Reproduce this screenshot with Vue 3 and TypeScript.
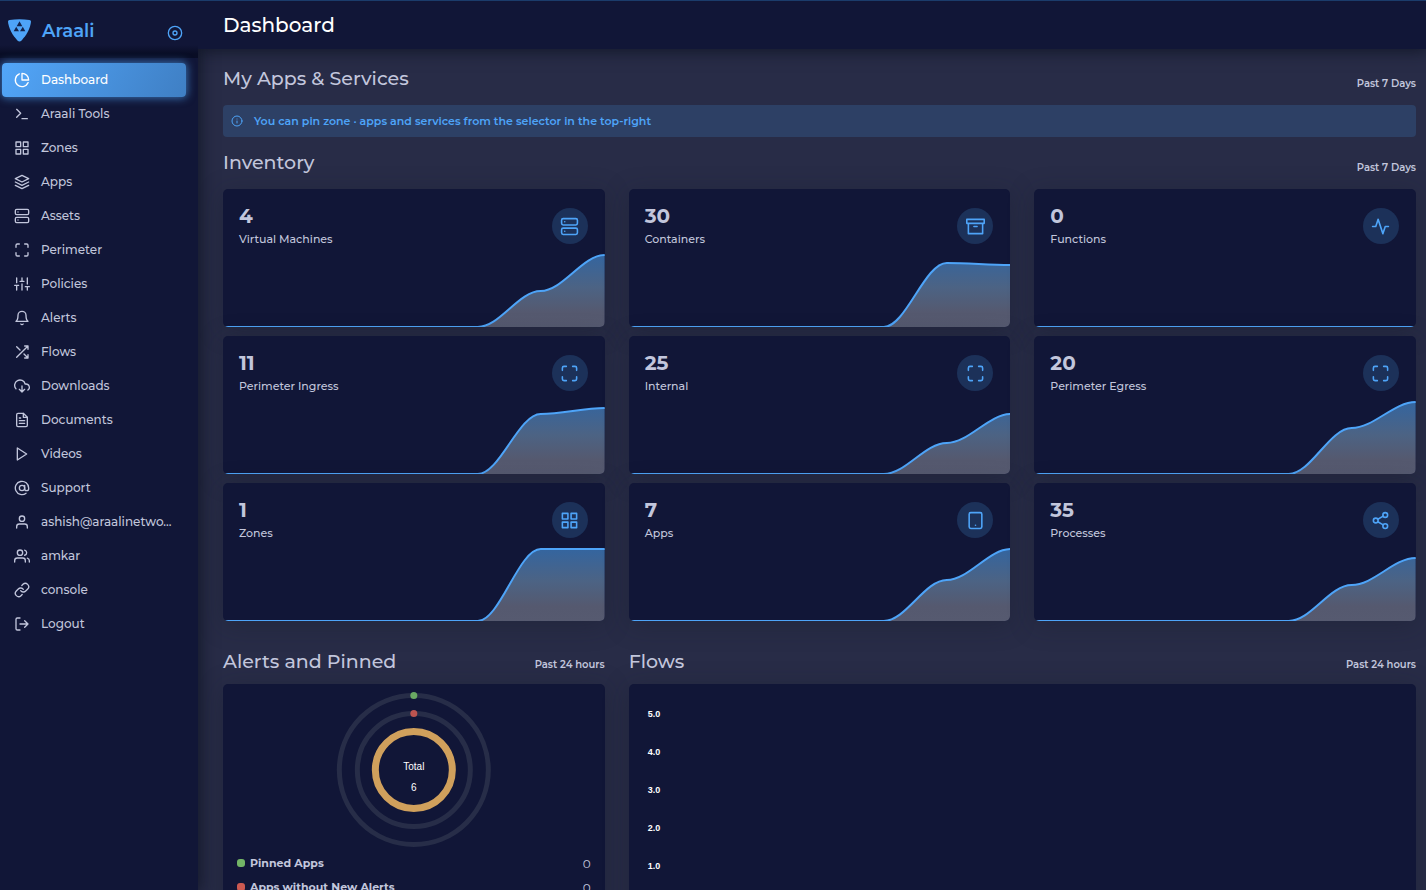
<script setup lang="ts">
interface NavItem {
  label: string
  icon: string
}

interface Stat {
  value: number
  label: string
  icon: string
  mid: number
  end: number
}

interface LegendRow {
  label: string
  value: number
  tone: string
}

const icons: Record<string, string> = {
  pie: '<path d="M21.21 15.89A10 10 0 1 1 8 2.83"/><path d="M22 12A10 10 0 0 0 12 2v10z"/>',
  terminal: '<path d="M4 17l6-6-6-6"/><path d="M12 19h8"/>',
  grid: '<path d="M3 3h7v7H3zM14 3h7v7h-7zM14 14h7v7h-7zM3 14h7v7H3z"/>',
  layers: '<path d="M12 2L2 7l10 5 10-5-10-5z"/><path d="M2 17l10 5 10-5"/><path d="M2 12l10 5 10-5"/>',
  server: '<rect x="2" y="2" width="20" height="8" rx="2"/><rect x="2" y="14" width="20" height="8" rx="2"/><path d="M6 6h.01M6 18h.01"/>',
  maximize: '<path d="M8 3H5a2 2 0 0 0-2 2v3m18 0V5a2 2 0 0 0-2-2h-3m0 18h3a2 2 0 0 0 2-2v-3M3 16v3a2 2 0 0 0 2 2h3"/>',
  sliders: '<path d="M4 21v-7M4 10V3M12 21v-9M12 8V3M20 21v-5M20 12V3M1 14h6M9 8h6M17 16h6"/>',
  bell: '<path d="M18 8A6 6 0 0 0 6 8c0 7-3 9-3 9h18s-3-2-3-9"/><path d="M13.73 21a2 2 0 0 1-3.46 0"/>',
  shuffle: '<path d="M16 3h5v5M4 20L21 3M21 16v5h-5M15 15l6 6M4 4l5 5"/>',
  download: '<path d="M8 17l4 4 4-4M12 12v9"/><path d="M20.88 18.09A5 5 0 0 0 18 9h-1.26A8 8 0 1 0 3 16.29"/>',
  file: '<path d="M14 2H6a2 2 0 0 0-2 2v16a2 2 0 0 0 2 2h12a2 2 0 0 0 2-2V8z"/><path d="M14 2v6h6M16 13H8M16 17H8M10 9H8"/>',
  play: '<path d="M5 3l14 9-14 9V3z"/>',
  at: '<circle cx="12" cy="12" r="4"/><path d="M16 8v5a3 3 0 0 0 6 0v-1a10 10 0 1 0-3.92 7.94"/>',
  user: '<path d="M20 21v-2a4 4 0 0 0-4-4H8a4 4 0 0 0-4 4v2"/><circle cx="12" cy="7" r="4"/>',
  users: '<path d="M17 21v-2a4 4 0 0 0-4-4H5a4 4 0 0 0-4 4v2"/><circle cx="9" cy="7" r="4"/><path d="M23 21v-2a4 4 0 0 0-3-3.87M16 3.13a4 4 0 0 1 0 7.75"/>',
  link: '<path d="M10 13a5 5 0 0 0 7.54.54l3-3a5 5 0 0 0-7.07-7.07l-1.72 1.71"/><path d="M14 11a5 5 0 0 0-7.54-.54l-3 3a5 5 0 0 0 7.07 7.07l1.71-1.71"/>',
  logout: '<path d="M9 21H5a2 2 0 0 1-2-2V5a2 2 0 0 1 2-2h4M16 17l5-5-5-5M21 12H9"/>',
  archive: '<path d="M21 8v13H3V8M1 3h22v5H1zM10 12h4"/>',
  activity: '<path d="M22 12h-4l-3 9L9 3l-3 9H2"/>',
  tablet: '<rect x="4" y="2" width="16" height="20" rx="2"/><path d="M12 18h.01"/>',
  share: '<circle cx="18" cy="5" r="3"/><circle cx="6" cy="12" r="3"/><circle cx="18" cy="19" r="3"/><path d="M8.59 13.51l6.83 3.98M15.41 6.51l-6.82 3.98"/>',
  disc: '<circle cx="12" cy="12" r="10"/><circle cx="12" cy="12" r="3"/>',
  info: '<circle cx="12" cy="12" r="10"/><path d="M12 16v-4M12 8h.01"/>',
}

const navItems: NavItem[] = [
  { label: 'Dashboard', icon: 'pie' },
  { label: 'Araali Tools', icon: 'terminal' },
  { label: 'Zones', icon: 'grid' },
  { label: 'Apps', icon: 'layers' },
  { label: 'Assets', icon: 'server' },
  { label: 'Perimeter', icon: 'maximize' },
  { label: 'Policies', icon: 'sliders' },
  { label: 'Alerts', icon: 'bell' },
  { label: 'Flows', icon: 'shuffle' },
  { label: 'Downloads', icon: 'download' },
  { label: 'Documents', icon: 'file' },
  { label: 'Videos', icon: 'play' },
  { label: 'Support', icon: 'at' },
  { label: 'ashish@araalinetwo...', icon: 'user' },
  { label: 'amkar', icon: 'users' },
  { label: 'console', icon: 'link' },
  { label: 'Logout', icon: 'logout' },
]

// mid and end are the heights of the last two samples of each sparkline
const stats: Stat[] = [
  { value: 4, label: 'Virtual Machines', icon: 'server', mid: 36, end: 72 },
  { value: 30, label: 'Containers', icon: 'archive', mid: 64, end: 62 },
  { value: 0, label: 'Functions', icon: 'activity', mid: 0, end: 0 },
  { value: 11, label: 'Perimeter Ingress', icon: 'maximize', mid: 60, end: 66 },
  { value: 25, label: 'Internal', icon: 'maximize', mid: 31, end: 60 },
  { value: 20, label: 'Perimeter Egress', icon: 'maximize', mid: 46, end: 72 },
  { value: 1, label: 'Zones', icon: 'grid', mid: 72, end: 72 },
  { value: 7, label: 'Apps', icon: 'tablet', mid: 41, end: 72 },
  { value: 35, label: 'Processes', icon: 'share', mid: 36, end: 63 },
]

const legend: LegendRow[] = [
  { label: 'Pinned Apps', value: 0, tone: 'green' },
  { label: 'Apps without New Alerts', value: 0, tone: 'red' },
]

const ticks = ['5.0', '4.0', '3.0', '2.0', '1.0']

const BASE = 80

function linePath(s: Stat): string {
  const mid = BASE - s.mid
  const end = BASE - s.end
  return `M0 ${BASE}H255C277 ${BASE} 296 ${mid} 318 ${mid}C340 ${mid} 360 ${end} 382 ${end}`
}

function areaPath(s: Stat): string {
  return `${linePath(s)}V${BASE}H0Z`
}
</script>

<template>
  <div class="shell">
    <aside class="sidebar">
      <div class="brand">
        <a href="#" class="brand-link">
          <svg class="logo" viewBox="0 0 24 23" aria-hidden="true">
            <path d="M0 2.600C0 1.600 .6 1.200 1.600 1C8 .1 15 .1 21.400 1C22.400 1.200 23 1.600 23 2.600C22.500 9 18.500 16.500 13.600 21.400C12.200 22.800 10.800 22.800 9.400 21.400C4.500 16.500 .5 9 0 2.600Z" fill="#4ea4f8" />
            <path d="M11.500 2.200L14.300 7.300H8.700ZM8.200 7.800L11 12.200H5.700ZM14.800 7.800L17.300 12.200H12Z" fill="#14244d" />
          </svg>
          <span>Araali</span>
        </a>
        <button type="button" class="pin" aria-label="Toggle menu">
          <svg class="icon" viewBox="0 0 24 24" v-html="icons.disc"></svg>
        </button>
      </div>
      <nav class="nav">
        <a v-for="(item, i) in navItems" :key="item.label" href="#" class="nav-item" :class="{ active: i === 0 }">
          <svg class="icon" viewBox="0 0 24 24" aria-hidden="true" v-html="icons[item.icon]"></svg>
          <span>{{ item.label }}</span>
        </a>
      </nav>
    </aside>

    <div class="page">
      <header class="topbar">
        <h1>Dashboard</h1>
      </header>
      <main class="content">
        <div class="section-head">
          <h2>My Apps &amp; Services</h2>
          <span class="period">Past 7 Days</span>
        </div>
        <div class="notice">
          <svg class="icon" viewBox="0 0 24 24" aria-hidden="true" v-html="icons.info"></svg>
          <span>You can pin zone · apps and services from the selector in the top-right</span>
        </div>

        <div class="section-head">
          <h2>Inventory</h2>
          <span class="period">Past 7 Days</span>
        </div>
        <section class="stats">
          <article v-for="s in stats" :key="s.label" class="card stat">
            <div class="stat-head">
              <div>
                <div class="stat-value">{{ s.value }}</div>
                <div class="stat-label">{{ s.label }}</div>
              </div>
              <span class="badge">
                <svg class="icon" viewBox="0 0 24 24" aria-hidden="true" v-html="icons[s.icon]"></svg>
              </span>
            </div>
            <svg class="spark" viewBox="0 0 382 80" preserveAspectRatio="none" aria-hidden="true">
              <defs>
                <linearGradient id="sparkFill" gradientUnits="userSpaceOnUse" x1="0" y1="8" x2="0" y2="80">
                  <stop offset="0" stop-color="#34659f" />
                  <stop offset="0.45" stop-color="#4c6384" />
                  <stop offset="0.8" stop-color="#55596f" />
                  <stop offset="1" stop-color="#565a70" />
                </linearGradient>
              </defs>
              <path v-if="s.end > 0" :d="areaPath(s)" fill="url(#sparkFill)" />
              <path class="spark-line" :d="linePath(s)" />
            </svg>
          </article>
        </section>

        <div class="bottom">
          <section class="alerts">
            <div class="section-head">
              <h2>Alerts and Pinned</h2>
              <span class="period">Past 24 hours</span>
            </div>
            <div class="card">
              <svg class="rings" viewBox="0 0 160 160" role="img" aria-label="Total 6">
                <circle cx="80" cy="80" r="74.500" class="track" />
                <circle cx="80" cy="80" r="56.500" class="track" />
                <circle cx="80" cy="80" r="38.500" class="total-ring" />
                <circle cx="80" cy="5.500" r="3.500" fill="#6aa863" />
                <circle cx="80" cy="23.500" r="3.500" fill="#bd5450" />
                <text x="80" y="80">Total</text>
                <text x="80" y="101">6</text>
              </svg>
              <ul class="legend">
                <li v-for="row in legend" :key="row.label">
                  <i class="dot" :class="row.tone"></i>
                  <span class="legend-label">{{ row.label }}</span>
                  <span>{{ row.value }}</span>
                </li>
              </ul>
            </div>
          </section>
          <section class="flows">
            <div class="section-head">
              <h2>Flows</h2>
              <span class="period">Past 24 hours</span>
            </div>
            <div class="card chart">
              <span v-for="t in ticks" :key="t" class="tick">{{ t }}</span>
            </div>
          </section>
        </div>
      </main>
    </div>
  </div>
</template>

<style>
body {
  margin: 0;
  background: #282c47;
}
</style>

<style scoped>
.shell {
  display: flex;
  height: 100vh;
  overflow: hidden;
  box-sizing: border-box;
  border-top: 1px solid #1b3c6b;
  font-family: Montserrat, Inter, "Open Sans", sans-serif;
  color: #c2c6dc;
  background: #282c47;
}

.icon {
  display: block;
  flex: none;
  width: 16px;
  height: 16px;
  fill: none;
  stroke: currentColor;
  stroke-width: 2;
  stroke-linecap: round;
  stroke-linejoin: round;
}

.sidebar {
  flex: none;
  width: 198px;
  background: #111637;
  box-shadow: 0 0 15px 2px rgba(12, 18, 32, 0.8);
  z-index: 2;
}

.brand {
  display: flex;
  align-items: center;
  justify-content: space-between;
  height: 57px;
  padding: 10px 15px 8px 8px;
  box-sizing: border-box;
  background: linear-gradient(#111637 44px, #090d25 53px);
}

.brand-link {
  display: flex;
  align-items: center;
  gap: 10px;
  color: #4ea4f8;
  font-size: 18px;
  line-height: 24px;
  font-weight: 600;
  text-decoration: none;
}

.logo {
  width: 24px;
  height: 23px;
}

.pin {
  margin: 4px 0 0;
  padding: 0;
  border: 0;
  background: none;
  color: #4ea4f8;
}

.nav {
  padding: 5px 12px 0 2px;
}

.nav-item {
  display: flex;
  align-items: center;
  gap: 11px;
  height: 34px;
  padding-left: 12px;
  border-radius: 4px;
  color: #c2c6dc;
  font-size: 12px;
  line-height: 18px;
  font-weight: 500;
  text-decoration: none;
  white-space: nowrap;
}

.nav-item.active {
  color: #fff;
  background: linear-gradient(118deg, #52a6f9, #3f7fc4);
  box-shadow: 0 0 8px 1px rgba(78, 164, 248, 0.65);
}

.page {
  flex: 1;
  min-width: 0;
  display: flex;
  flex-direction: column;
}

.topbar {
  position: relative;
  flex: none;
  height: 48px;
  padding-left: 25px;
  background: #111637;
  box-shadow: 0 0 15px 2px rgba(12, 18, 32, 0.8);
  clip-path: inset(0 0 -30px 0);
  z-index: 3;
}

h1 {
  margin: 0;
  color: #fff;
  font-size: 20px;
  line-height: 48px;
  font-weight: 500;
}

.content {
  flex: 1;
  min-height: 0;
  overflow-y: auto;
  scrollbar-width: none;
  padding: 16px 10px 0 25px;
}

.section-head {
  display: flex;
  justify-content: space-between;
  align-items: flex-end;
  height: 28px;
  margin-bottom: 12px;
}

h2 {
  margin: 0;
  font-size: 19px;
  line-height: 28px;
  font-weight: 500;
}

.period {
  font-size: 10px;
  line-height: 18px;
  font-weight: 600;
}

.notice {
  display: flex;
  align-items: center;
  gap: 11px;
  height: 32px;
  margin-bottom: 12px;
  padding-left: 8px;
  border-radius: 4px;
  background: #2d4065;
  color: #4ea4f8;
  font-size: 11px;
  font-weight: 600;
}

.notice .icon {
  width: 12px;
  height: 12px;
}

.card {
  border-radius: 5px;
  background: #111637;
  box-shadow: 0 4px 24px rgba(24, 30, 44, 0.35);
  overflow: hidden;
}

.stats {
  display: grid;
  grid-template-columns: repeat(3, minmax(0, 1fr));
  gap: 9px 24px;
}

.stat {
  display: flex;
  flex-direction: column;
  justify-content: space-between;
  height: 138px;
}

.stat-head {
  display: flex;
  justify-content: space-between;
  padding: 15px 17px 0 16px;
  height: 43px;
}

.stat-value {
  font-size: 20px;
  line-height: 24px;
  font-weight: 700;
}

.stat-label {
  font-size: 11px;
  line-height: 22px;
  font-weight: 500;
}

.badge {
  display: grid;
  place-items: center;
  width: 36px;
  height: 36px;
  margin-top: 4px;
  border-radius: 50%;
  background: #1c3159;
  color: #4ea4f8;
}

.badge .icon {
  width: 19px;
  height: 19px;
}

.spark {
  display: block;
  width: 100%;
  height: 80px;
}

.spark-line {
  fill: none;
  stroke: #4ea4f8;
  stroke-width: 2;
  vector-effect: non-scaling-stroke;
}

.bottom {
  display: grid;
  grid-template-columns: repeat(3, minmax(0, 1fr));
  gap: 24px;
  margin-top: 27px;
}

.bottom .section-head {
  align-items: baseline;
  margin-bottom: 8px;
}

.flows {
  grid-column: span 2;
}

.rings {
  display: block;
  width: 100%;
  height: 160px;
  margin-top: 6px;
}

.rings text {
  fill: #fff;
  font-family: "Liberation Sans", Arial, sans-serif;
  font-size: 10px;
  text-anchor: middle;
}

.track {
  fill: none;
  stroke: #272d48;
  stroke-width: 5;
}

.total-ring {
  fill: none;
  stroke: #d0a05c;
  stroke-width: 7;
}

.legend {
  margin: 0;
  padding: 1px 14px 12px;
  list-style: none;
  font-size: 12px;
}

.legend li {
  display: flex;
  align-items: center;
  height: 24px;
}

.dot {
  width: 8px;
  height: 8px;
  margin-right: 5px;
  border-radius: 3px;
}

.green {
  background: #73b566;
}

.red {
  background: #cc5951;
}

.legend-label {
  flex: 1;
  font-size: 11px;
  font-weight: 700;
}

.chart {
  display: flex;
  flex-direction: column;
  gap: 26px;
  min-height: 300px;
  padding: 24px 19px 0;
  box-sizing: border-box;
}

.tick {
  color: #fff;
  font-family: "Liberation Sans", Arial, sans-serif;
  font-size: 9px;
  line-height: 12px;
  font-weight: 700;
}
</style>
